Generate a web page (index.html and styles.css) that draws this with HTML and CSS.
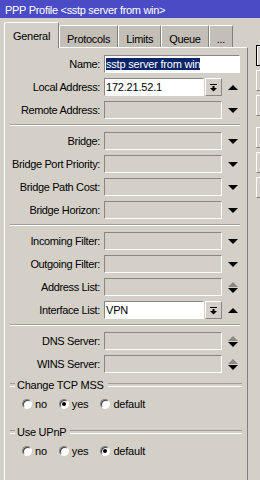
FILE: index.html
```html
<!DOCTYPE html>
<html lang="en">
  <head>
    <meta charset="UTF-8" />
    <title>PPP Profile</title>
    <link rel="stylesheet" href="styles.css">
  </head>
  <body>
    <div class="titlebar">PPP Profile &lt;sstp server from win&gt;</div>
    <div class="window">
      <div class="main">
        <div class="tabs">
          <div class="tab active">General</div>
          <div class="tab">Protocols</div>
          <div class="tab">Limits</div>
          <div class="tab">Queue</div>
          <div class="tab">...</div>
        </div>

        <div class="panel">
          <div class="row">
            <label>Name:</label>
            <div class="field wide edit"><span class="sel">sstp server from win</span></div>
          </div>
          <div class="row">
            <label>Local Address:</label>
            <div class="field short edit">172.21.52.1</div>
            <div class="dd-btn">
              <svg width="9" height="9" viewBox="0 0 9 9"><path d="M1 1.5h7" stroke="#000" /><path d="M3.5 3h2v2h2.5L4.5 8.5 1 5h2.5z" fill="#000" /></svg>
            </div>
            <div class="arrows"><span class="up"></span></div>
          </div>
          <div class="row">
            <label>Remote Address:</label>
            <div class="field"></div>
            <div class="arrows"><span class="down"></span></div>
          </div>

          <div class="sep"></div>

          <div class="row">
            <label>Bridge:</label>
            <div class="field"></div>
            <div class="arrows"><span class="down"></span></div>
          </div>
          <div class="row">
            <label>Bridge Port Priority:</label>
            <div class="field"></div>
            <div class="arrows"><span class="down"></span></div>
          </div>
          <div class="row">
            <label>Bridge Path Cost:</label>
            <div class="field"></div>
            <div class="arrows"><span class="down"></span></div>
          </div>
          <div class="row">
            <label>Bridge Horizon:</label>
            <div class="field"></div>
            <div class="arrows"><span class="down"></span></div>
          </div>

          <div class="sep"></div>

          <div class="row">
            <label>Incoming Filter:</label>
            <div class="field"></div>
            <div class="arrows"><span class="down"></span></div>
          </div>
          <div class="row">
            <label>Outgoing Filter:</label>
            <div class="field"></div>
            <div class="arrows"><span class="down"></span></div>
          </div>
          <div class="row">
            <label>Address List:</label>
            <div class="field"></div>
            <div class="arrows"><span class="up off"></span><span class="down"></span></div>
          </div>
          <div class="row">
            <label>Interface List:</label>
            <div class="field short edit">VPN</div>
            <div class="dd-btn">
              <svg width="9" height="9" viewBox="0 0 9 9"><path d="M1 1.5h7" stroke="#000" /><path d="M3.5 3h2v2h2.5L4.5 8.5 1 5h2.5z" fill="#000" /></svg>
            </div>
            <div class="arrows"><span class="up"></span></div>
          </div>

          <div class="sep"></div>

          <div class="row">
            <label>DNS Server:</label>
            <div class="field"></div>
            <div class="arrows"><span class="up off"></span><span class="down"></span></div>
          </div>
          <div class="row">
            <label>WINS Server:</label>
            <div class="field"></div>
            <div class="arrows"><span class="up off"></span><span class="down"></span></div>
          </div>

          <div class="group">Change TCP MSS</div>
          <div class="radios">
            <div class="radio"><i></i>no</div>
            <div class="radio"><i class="on"></i>yes</div>
            <div class="radio"><i></i>default</div>
          </div>

          <div class="group second">Use UPnP</div>
          <div class="radios">
            <div class="radio"><i></i>no</div>
            <div class="radio"><i></i>yes</div>
            <div class="radio"><i class="on"></i>default</div>
          </div>
        </div>
      </div>

      <div class="side">
        <div class="btn default"></div>
        <div class="btn"></div>
        <div class="btn"></div>
        <div class="btn spaced"></div>
        <div class="btn"></div>
        <div class="btn"></div>
      </div>
    </div>
  </body>
</html>
```

FILE: styles.css
```css
* {
  margin: 0;
  padding: 0;
  box-sizing: border-box;
}
body {
  width: 260px;
  height: 480px;
  overflow: hidden;
  background: #d4d0c8;
  color: #000;
  font-family: 'Liberation Sans', Arial, sans-serif;
  font-size: 11px;
}

.titlebar {
  height: 18px;
  padding: 3px 0 0 5px;
  line-height: 15px;
  background: #4b4bc6;
  color: #fff;
  letter-spacing: -0.3px;
  white-space: nowrap;
}

.window {
  display: flex;
}
.main {
  flex: none;
  width: 248px;
  padding: 4px 0 0 4px;
}

.tabs {
  display: flex;
  align-items: flex-end;
  height: 25px;
}
.tab {
  height: 22px;
  padding: 4px 7px 0;
  line-height: 18px;
  background: #c3bfb7;
  border-top: 1px solid #fff;
  border-left: 1px solid #fff;
  border-right: 1px solid #808080;
  border-radius: 2px 2px 0 0;
  letter-spacing: -0.3px;
  white-space: nowrap;
}
.tab.active {
  position: relative;
  z-index: 1;
  height: 26px;
  margin-bottom: -1px;
  padding: 4px 8px 0;
  line-height: 19px;
  background: #d4d0c8;
}

.panel {
  display: flex;
  flex-direction: column;
  gap: 5px;
  height: 433px;
  padding-top: 7px;
  border-top: 1px solid #fff;
  border-left: 1px solid #fff;
  border-right: 1px solid #808080;
}

.row {
  display: flex;
  align-items: center;
  height: 18px;
}
.row label {
  width: 95px;
  margin-right: 4px;
  text-align: right;
  letter-spacing: -0.35px;
  white-space: nowrap;
}

.field {
  width: 118px;
  height: 18px;
  padding-left: 1px;
  line-height: 16px;
  background: #d4d0c8;
  border: 1px solid;
  border-color: #8a8782 #fff #fff #8a8782;
  letter-spacing: -0.2px;
  white-space: nowrap;
  overflow: hidden;
}
.field.edit {
  background: #fff;
}
.field.wide {
  width: 136px;
}
.field.short {
  width: 100px;
  margin-right: 1px;
}
.sel {
  background: #0a246a;
  color: #fff;
}

.dd-btn {
  display: flex;
  align-items: center;
  justify-content: center;
  width: 17px;
  height: 18px;
  border: 1px solid;
  border-color: #fff #8a8782 #8a8782 #fff;
}

.arrows {
  display: flex;
  flex-direction: column;
  align-items: center;
  gap: 1px;
  width: 21px;
}
.up {
  border-left: 5px solid transparent;
  border-right: 5px solid transparent;
  border-bottom: 5px solid #000;
}
.up.off {
  border-bottom-color: #8c8a86;
}
.down {
  border-left: 5px solid transparent;
  border-right: 5px solid transparent;
  border-top: 5px solid #000;
}

.sep {
  height: 2px;
  margin: 0 7px 1px 5px;
  border-top: 1px solid #a09d96;
  border-bottom: 1px solid #fff;
}

.group {
  display: flex;
  align-items: center;
  height: 13px;
  margin: 0 5px 0 5px;
  letter-spacing: -0.25px;
  white-space: nowrap;
}
.group::before,
.group::after {
  content: "";
  height: 2px;
  border-top: 1px solid #a09d96;
  border-bottom: 1px solid #fff;
}
.group::before {
  width: 5px;
  margin-right: 2px;
}
.group::after {
  flex: 1;
  margin-left: 4px;
}
.group.second {
  margin-top: 8px;
}

.radios {
  display: flex;
  align-items: center;
  gap: 12px;
  height: 16px;
  padding-left: 17px;
  letter-spacing: -0.2px;
}
.radio {
  display: flex;
  align-items: center;
  gap: 3px;
}
.radio i {
  display: flex;
  align-items: center;
  justify-content: center;
  width: 10px;
  height: 10px;
  background: #fff;
  border: 1px solid;
  border-color: #808080 #fff #fff #808080;
  border-radius: 50%;
  box-shadow: inset 1px 1px 0 #404040;
}
.radio i.on::after {
  content: "";
  width: 4px;
  height: 4px;
  border-radius: 50%;
  background: #000;
}

.side {
  display: flex;
  flex-direction: column;
  gap: 4px;
  width: 4px;
  margin-left: 8px;
  padding-top: 27px;
}
.btn {
  flex: none;
  width: 4px;
  height: 21px;
  border-top: 1px solid #fff;
  border-left: 1px solid #fff;
  border-bottom: 1px solid #808080;
}
.btn.default {
  border-color: #000;
  box-shadow: inset 1px 1px 0 #fff;
}
.btn.spaced {
  margin-top: 7px;
}
```
